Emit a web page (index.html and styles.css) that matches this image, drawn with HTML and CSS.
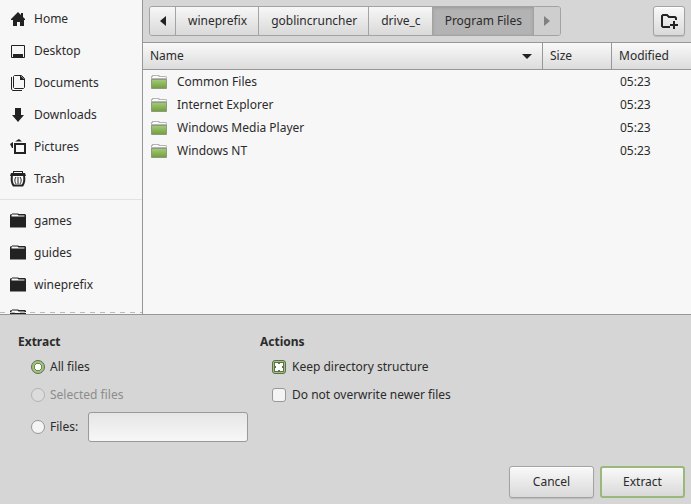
FILE: index.html
```html
<!DOCTYPE html>
<html lang="en">
<head>
  <meta charset="UTF-8">
  <meta name="viewport" content="width=device-width, initial-scale=1.0">
  <title>Extract</title>
  <link rel="stylesheet" href="styles.css">
</head>
<body>
  <!-- Shared icons -->
  <svg class="sprite" aria-hidden="true">
    <symbol id="folder-dark" viewBox="0 0 16 16">
      <path fill="#222" d="M1 1h1V0.500h6L9 1h6l1 1v12.500H0V2z"/>
      <path fill="#f7f7f7" d="M1.500 1.500h6l1 1h6v1h-13z"/>
    </symbol>
    <symbol id="folder-green" viewBox="0 0 16 16">
      <path fill="#b5b5b5" d="M1 2V1h7l1 1h6l1 1v3H0V2z"/>
      <path fill="#fafafa" d="M2 2h5l1 1h7v1H1V3h1zM1 5h14v1H1z"/>
      <path fill="url(#green)" stroke="#8c9a80" d="M.5 5.500h15v9H.5z"/>
    </symbol>
    <linearGradient id="green" x1="0" y1="0" x2="0" y2="1">
      <stop offset="0" stop-color="#a5cb78"/>
      <stop offset="1" stop-color="#729e3d"/>
    </linearGradient>
  </svg>

  <main class="chooser">
    <nav class="places">
      <a href="#" class="place">
        <svg class="icon" viewBox="0 0 16 16"><path fill="#222" d="M8 1l3 3V2h2v4l2 2v1h-1v6h-4v-4H7v4H3V9H1V8z"/></svg>
        Home
      </a>
      <a href="#" class="place">
        <svg class="icon" viewBox="0 0 16 16"><path fill="none" stroke="#222" d="M1.500 2.500h13v12h-13z"/><path fill="#222" d="M3 11h10v3H3z"/></svg>
        Desktop
      </a>
      <a href="#" class="place">
        <svg class="icon" viewBox="0 0 16 16"><path fill="none" stroke="#222" d="M4.500 .5h7l3 3v9l-1 1h-9l-1-1v-11zM1.500 2v12l1 1.500H12"/><path fill="#222" d="M10 0l5 5h-5z"/></svg>
        Documents
      </a>
      <a href="#" class="place">
        <svg class="icon" viewBox="0 0 16 16"><path fill="#222" d="M5 1h6v7h3l-6 7-6-7h3z"/></svg>
        Downloads
      </a>
      <a href="#" class="place">
        <svg class="icon" viewBox="0 0 16 16"><path fill="none" stroke="#222" stroke-width="2" d="M5 5h10v9H5z"/><path fill="#222" d="M5 2.500L9 0l3 2.500H5zM0 5l3-2v6H2z"/></svg>
        Pictures
      </a>
      <a href="#" class="place">
        <svg class="icon" viewBox="0 0 16 16"><path fill="#222" d="M3 0h10v2h2l1 3H0l1-3h2z"/><path fill="#f7f7f7" d="M4 1h8v1H4z"/><path fill="none" stroke="#222" stroke-width="2" d="M2 5C1 9 2 12 3.500 14.500h9C14 12 15 9 14 5"/><path fill="none" stroke="#222" d="M6 6c-2 3-1 5 0 7M8 6v7M10 6c2 3 1 5 0 7"/></svg>
        Trash
      </a>
      <hr class="places-line">
      <a href="#" class="place"><svg class="icon"><use href="#folder-dark"/></svg>games</a>
      <a href="#" class="place"><svg class="icon"><use href="#folder-dark"/></svg>guides</a>
      <a href="#" class="place"><svg class="icon"><use href="#folder-dark"/></svg>wineprefix</a>
      <a href="#" class="place" aria-label="Bookmark"><svg class="icon"><use href="#folder-dark"/></svg></a>
    </nav>

    <section class="browser">
      <div class="toolbar">
        <div class="pathbar">
          <button type="button" class="path arrow" aria-label="Back"><svg class="tri" viewBox="0 0 6 10"><path fill="#222" d="M6 0v10L0 5z"/></svg></button>
          <button type="button" class="path">wineprefix</button>
          <button type="button" class="path">goblincruncher</button>
          <button type="button" class="path">drive_c</button>
          <button type="button" class="path current">Program Files</button>
          <button type="button" class="path arrow" aria-label="Forward" disabled><svg class="tri" viewBox="0 0 6 10"><path fill="#808080" d="M0 0v10l6-5z"/></svg></button>
        </div>
        <button type="button" class="button new-folder" aria-label="Create Folder">
          <svg class="icon" viewBox="0 0 16 16"><path fill="none" stroke="#222" stroke-width="2" stroke-linejoin="round" d="M9 14H2L1 13V3l1-1h4l2 2h6l1 1v2"/><path fill="#222" d="M12 8h2v3h3v2h-3v3h-2v-3H9v-2h3z"/></svg>
        </button>
      </div>

      <table class="files">
        <thead>
          <tr>
            <th class="name"><span class="sort">Name<svg class="down" viewBox="0 0 10 5"><path fill="#222" d="M0 0h10L5 5z"/></svg></span></th>
            <th class="size">Size</th>
            <th class="modified">Modified</th>
          </tr>
        </thead>
        <tbody>
          <tr><td><span class="file"><svg class="icon"><use href="#folder-green"/></svg>Common Files</span></td><td></td><td>05:23</td></tr>
          <tr><td><span class="file"><svg class="icon"><use href="#folder-green"/></svg>Internet Explorer</span></td><td></td><td>05:23</td></tr>
          <tr><td><span class="file"><svg class="icon"><use href="#folder-green"/></svg>Windows Media Player</span></td><td></td><td>05:23</td></tr>
          <tr><td><span class="file"><svg class="icon"><use href="#folder-green"/></svg>Windows NT</span></td><td></td><td>05:23</td></tr>
        </tbody>
      </table>
    </section>
  </main>

  <form class="options">
    <div class="groups">
      <fieldset class="group extract">
        <legend>Extract</legend>
        <label class="option"><input type="radio" name="what" checked>All files</label>
        <label class="option off"><input type="radio" name="what" disabled>Selected files</label>
        <div class="files-option">
          <label class="option"><input type="radio" name="what">Files:</label>
          <input type="text" class="pattern" aria-label="Files">
        </div>
      </fieldset>
      <fieldset class="group">
        <legend>Actions</legend>
        <label class="option"><input type="checkbox" checked>Keep directory structure</label>
        <label class="option"><input type="checkbox">Do not overwrite newer files</label>
      </fieldset>
    </div>
    <div class="actions">
      <button type="button" class="button">Cancel</button>
      <button type="submit" class="button default">Extract</button>
    </div>
  </form>
</body>
</html>
```

FILE: styles.css
```css
* {
  box-sizing: border-box;
}

body {
  margin: 0;
  height: 100vh;
  display: flex;
  flex-direction: column;
  background: #d6d6d6;
  color: #2b2b2b;
  font: 12px/16px "Noto Sans", sans-serif;
}

button,
input {
  font: inherit;
  color: inherit;
  margin: 0;
}

.sprite {
  position: absolute;
  width: 0;
  height: 0;
}

.icon {
  width: 16px;
  height: 16px;
  flex: none;
  overflow: visible;
}

/* File chooser */
.chooser {
  flex: 1;
  min-height: 0;
  display: flex;
  border-bottom: 1px solid #979797;
}

/* Places sidebar */
.places {
  position: relative;
  width: 143px;
  flex: none;
  padding-top: 3px;
  overflow: hidden;
  background: #f7f7f7;
  border-right: 1px solid #979797;
}

.places::after {
  content: "";
  position: absolute;
  left: 0;
  right: 0;
  bottom: 1px;
  height: 1px;
  background: repeating-linear-gradient(90deg, #bbb 0 5px, #f7f7f7 5px 10px);
}

.place {
  display: flex;
  align-items: center;
  gap: 8px;
  height: 32px;
  padding-left: 10px;
  color: inherit;
  text-decoration: none;
}

.places-line {
  margin: 4px 0 5px;
  border: 0;
  border-top: 1px solid #e2e2e2;
}

/* Right side */
.browser {
  flex: 1;
  min-width: 0;
  background: #f7f7f7;
}

.toolbar {
  display: flex;
  justify-content: space-between;
  padding: 6px;
  background: #d6d6d6;
}

.pathbar {
  display: flex;
  height: 30px;
  border: 1px solid #a3a3a3;
  border-radius: 3px;
  overflow: hidden;
}

.path {
  padding: 0 11px 0 12px;
  border: 0;
  border-right: 1px solid #a3a3a3;
  background: linear-gradient(#f7f7f7, #d9d9d9);
}

.path.arrow {
  display: flex;
  align-items: center;
  justify-content: center;
  width: 26px;
  padding: 0;
}

.path.current {
  background: #b3b3b3;
  box-shadow: inset 0 1px 3px #999;
}

.path:last-child {
  border-right: 0;
  background: #cecece;
}

.tri {
  width: 6px;
  height: 10px;
}

.button {
  width: 85px;
  height: 32px;
  padding: 0;
  border: 1px solid #a3a3a3;
  border-radius: 3px;
  background: linear-gradient(#f9f9f9, #d9d9d9);
  box-shadow: inset 0 1px #fff, 0 1px 1px #bbb;
}

.button.default {
  border: 2px solid #9ab87c;
  box-shadow: none;
}

.button.new-folder {
  display: flex;
  align-items: center;
  justify-content: center;
  width: 32px;
  height: 30px;
}

/* File list */
.files {
  width: 100%;
  table-layout: fixed;
  border-collapse: separate;
  border-spacing: 0;
}

.files th {
  height: 28px;
  padding: 0 7px;
  border: 1px solid #979797;
  border-width: 1px 1px 1px 0;
  background: linear-gradient(#f9f9f9, #dcdcdc);
  font-weight: normal;
  text-align: left;
}

.files .size {
  width: 69px;
}

.files .modified {
  width: 79px;
  border-right: 0;
}

.sort {
  display: flex;
  align-items: center;
  justify-content: space-between;
  padding-right: 3px;
}

.down {
  width: 10px;
  height: 5px;
}

.files td {
  height: 23px;
  padding: 0 8px;
}

.file {
  display: flex;
  align-items: center;
  gap: 10px;
}

/* Extract options */
.options {
  padding: 19px 6px 6px;
}

.groups {
  display: flex;
  padding-left: 12px;
}

.group {
  min-width: 0;
  margin: 0;
  padding: 0;
  border: 0;
}

.group.extract {
  width: 242px;
  padding-right: 12px;
}

legend {
  padding: 0;
  font-weight: bold;
}

.option {
  display: flex;
  align-items: center;
  gap: 6px;
  height: 28px;
  margin-left: 12px;
}

legend + .option {
  margin-top: 3px;
}

.extract .option {
  gap: 5px;
  margin-left: 13px;
}

.option.off {
  color: #8c8c8c;
}

.files-option {
  display: flex;
  align-items: center;
  gap: 10px;
  margin-top: 3px;
}

.pattern {
  flex: 1;
  min-width: 0;
  height: 30px;
  padding: 0 6px;
  border: 1px solid #999;
  border-radius: 3px;
  background: linear-gradient(#e6e6e6, #f7f7f7);
}

input[type="radio"],
input[type="checkbox"] {
  appearance: none;
  width: 14px;
  height: 14px;
  border: 1px solid #979797;
  border-radius: 3px;
  background: #f4f4f4;
}

input[type="radio"] {
  border-radius: 50%;
}

input[type="radio"]:checked {
  border-color: #5f6b54;
  background: radial-gradient(#fff 0 3px, #6d8655 3px 4px, #a0c47a 4px);
}

input[type="radio"]:disabled {
  border-color: #b3b3b3;
  background: #dcdcdc;
}

input[type="checkbox"]:checked {
  display: grid;
  place-items: center;
  border-color: #5f6b54;
  background: #a0c47a;
}

/* White cross on a dark green square */
input[type="checkbox"]:checked::before {
  content: "";
  width: 8px;
  height: 8px;
  border: 1px solid #5f7549;
  background:
    linear-gradient(45deg, transparent 36%, #fff 36% 64%, transparent 64%),
    linear-gradient(-45deg, #5f7549 36%, #fff 36% 64%, #5f7549 64%);
  background-origin: border-box;
  background-clip: padding-box;
}

.actions {
  display: flex;
  justify-content: flex-end;
  gap: 6px;
  margin-top: 24px;
}
```
